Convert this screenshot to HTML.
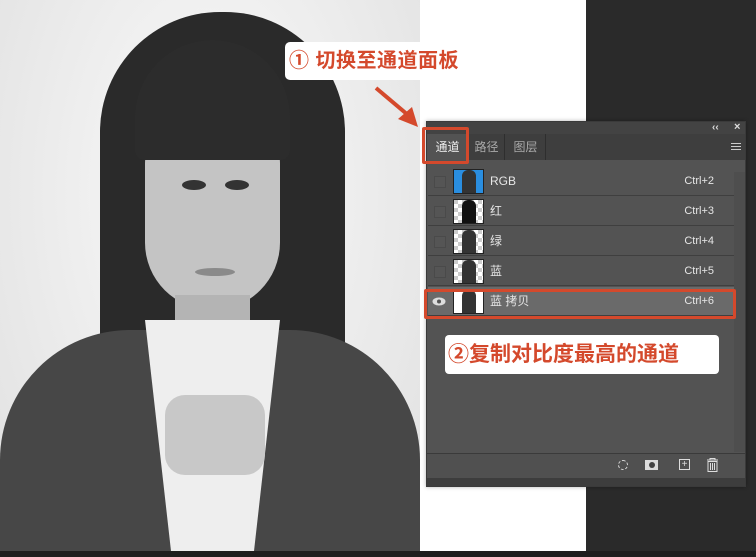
<!DOCTYPE html>
<html><head><meta charset="utf-8"><style>
*{margin:0;padding:0;box-sizing:border-box}
body{width:756px;height:557px;overflow:hidden;background:#2a2a2a;position:relative;font-family:"Liberation Sans","Noto Sans CJK SC",sans-serif}
.abs{position:absolute}
.row{position:absolute;left:428px;width:306px;height:29px;background:#535353;border-bottom:1px solid #3f3f3f;color:#e6e6e6;font-size:12px;line-height:29px}
.row .cb{position:absolute;left:6px;top:9px;width:12px;height:12px;border:1px solid #4a4a4a;background:#555}
.row .th{position:absolute;left:25px;top:2px;width:31px;height:25px;border:1px solid #222;background:repeating-conic-gradient(#fff 0 25%,#ccc 0 50%) 0 0/8px 8px}
.row .th i{position:absolute;left:8px;top:0;width:14px;height:23px;background:#333;border-radius:6px 6px 0 0}
.row .nm{position:absolute;left:62px;top:0}
.row .sc{position:absolute;right:20px;top:0;font-size:11px}
</style></head><body>
<div class="abs" style="left:420px;top:0;width:166px;height:551px;background:#fff"></div>
<!-- photo -->
<div class="abs" style="left:0;top:0;width:420px;height:551px;background:radial-gradient(ellipse at 50% 35%,#fafafa,#e4e4e4 85%);overflow:hidden">
 <div class="abs" style="left:100px;top:12px;width:245px;height:370px;background:#2a2a2a;border-radius:120px 120px 30px 30px"></div>
 <div class="abs" style="left:145px;top:110px;width:135px;height:200px;background:#c4c4c4;border-radius:55px 55px 70px 70px"></div>
 <div class="abs" style="left:135px;top:40px;width:155px;height:120px;background:#2c2c2c;border-radius:80px 80px 10px 10px"></div>
 <div class="abs" style="left:175px;top:295px;width:75px;height:60px;background:#b4b4b4"></div>
 <div class="abs" style="left:0;top:330px;width:420px;height:230px;background:#474747;border-radius:130px 130px 0 0"></div>
 <div class="abs" style="left:145px;top:320px;width:135px;height:240px;background:#eee;clip-path:polygon(0 0,100% 0,80% 100%,20% 100%)"></div>
 <div class="abs" style="left:165px;top:395px;width:100px;height:80px;background:#c8c8c8;border-radius:20px"></div>
 <div class="abs" style="left:182px;top:180px;width:24px;height:10px;background:#333;border-radius:50%"></div>
 <div class="abs" style="left:225px;top:180px;width:24px;height:10px;background:#333;border-radius:50%"></div>
 <div class="abs" style="left:195px;top:268px;width:40px;height:8px;background:#8a8a8a;border-radius:50%"></div>
</div>
<div class="abs" style="left:0;top:551px;width:756px;height:6px;background:#1e1e1e"></div>
<!-- annotation 1 -->
<div class="abs" style="left:285px;top:42px;width:206px;height:38px;background:#fff;border-radius:5px;color:#d4492c;font-weight:bold;font-size:20px;line-height:38px;padding-left:4px;white-space:nowrap;letter-spacing:0.5px">① 切换至通道面板</div>
<svg class="abs" style="left:370px;top:85px" width="55" height="48"><path d="M6 3 L38 30" stroke="#d4492c" stroke-width="4"/><path d="M48 42 L28 34 L42 22 Z" fill="#d4492c"/></svg>
<!-- panel -->
<div class="abs" style="left:426px;top:121px;width:320px;height:366px;background:#4b4b4b;border:1px solid #3a3a3a;box-shadow:0 0 4px rgba(0,0,0,.3)"></div>
<div class="abs" style="left:427px;top:122px;width:318px;height:12px;background:#434343"></div>
<div class="abs" style="left:712px;top:122px;color:#ddd;font-size:10px;font-weight:bold">‹‹</div>
<div class="abs" style="left:734px;top:121px;color:#ddd;font-size:11px;font-weight:bold">×</div>
<div class="abs" style="left:427px;top:134px;width:318px;height:26px;background:#3e3e3e"></div>
<div class="abs" style="left:427px;top:134px;width:41px;height:26px;background:#535353;color:#eee;font-size:12px;line-height:26px;text-align:center">通道</div>
<div class="abs" style="left:469px;top:134px;width:36px;height:26px;border-right:1px solid #2e2e2e;color:#aaa;font-size:12px;line-height:26px;text-align:center">路径</div>
<div class="abs" style="left:506px;top:134px;width:40px;height:26px;border-right:1px solid #2e2e2e;color:#aaa;font-size:12px;line-height:26px;text-align:center">图层</div>
<div class="abs" style="left:731px;top:143px;width:10px;height:7px;border-top:1px solid #ccc;border-bottom:1px solid #ccc"><div style="margin-top:2px;border-top:1px solid #ccc"></div></div>
<div class="abs" style="left:427px;top:160px;width:318px;height:293px;background:#535353"></div>
<div class="abs" style="left:734px;top:172px;width:11px;height:280px;background:#4e4e4e"></div>
<div class="row" style="top:167px"><div class="cb"></div><div class="th" style="background:#2a8ee0"><i></i></div><span class="nm">RGB</span><span class="sc">Ctrl+2</span></div>
<div class="row" style="top:197px"><div class="cb"></div><div class="th"><i style="background:#111"></i></div><span class="nm">红</span><span class="sc">Ctrl+3</span></div>
<div class="row" style="top:227px"><div class="cb"></div><div class="th"><i></i></div><span class="nm">绿</span><span class="sc">Ctrl+4</span></div>
<div class="row" style="top:257px"><div class="cb"></div><div class="th"><i></i></div><span class="nm">蓝</span><span class="sc">Ctrl+5</span></div>
<div class="row" style="top:287px;background:#6a6a6a;width:306px"><svg style="position:absolute;left:4px;top:10px" width="14" height="9"><ellipse cx="7" cy="4.5" rx="6.5" ry="4" fill="#ddd"/><circle cx="7" cy="4.5" r="2" fill="#555"/></svg><div class="th" style="background:#fff"><i></i></div><span class="nm">蓝 拷贝</span><span class="sc">Ctrl+6</span></div>
<div class="abs" style="left:424px;top:289px;width:312px;height:30px;border:3px solid #d4492c;border-radius:2px"></div>
<div class="abs" style="left:422px;top:127px;width:47px;height:37px;border:3px solid #d4492c;border-radius:2px"></div>
<!-- annotation 2 -->
<div class="abs" style="left:445px;top:335px;width:274px;height:39px;background:#fff;border-radius:4px;color:#d4492c;font-weight:bold;font-size:21px;line-height:39px;padding-left:3px;white-space:nowrap">②复制对比度最高的通道</div>
<!-- bottom bar -->
<div class="abs" style="left:427px;top:453px;width:318px;height:1px;background:#3a3a3a"></div>
<div class="abs" style="left:427px;top:454px;width:318px;height:24px;background:#505050"></div>
<div class="abs" style="left:427px;top:478px;width:318px;height:8px;background:#3d3d3d"></div>
<div class="abs" style="left:618px;top:460px;width:10px;height:10px;border:1px dashed #ddd;border-radius:50%"></div>
<div class="abs" style="left:645px;top:460px;width:13px;height:10px;background:#ddd"><div style="width:6px;height:6px;margin:2px auto;background:#444;border-radius:50%"></div></div>
<div class="abs" style="left:679px;top:459px;width:11px;height:11px;border:1px solid #ddd;color:#ddd;font-size:10px;line-height:9px;text-align:center">+</div>
<svg class="abs" style="left:706px;top:458px" width="13" height="14"><path d="M1 2h11M4 2V0.5h5V2M2 3.5h9v10H2z M4.5 5v7M6.5 5v7M8.5 5v7" stroke="#ddd" fill="none"/></svg>
</body></html>
